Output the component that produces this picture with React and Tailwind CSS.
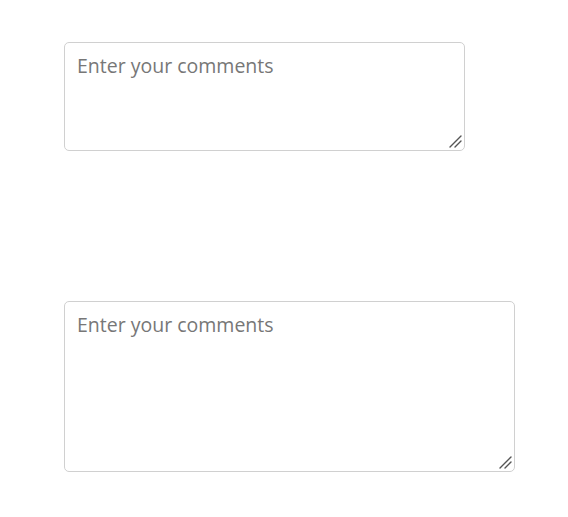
function Grip() {
  return (
    <svg
      className="pointer-events-none absolute bottom-[3px] right-[3px]"
      width="13"
      height="13"
      viewBox="0 0 13 13"
    >
      <path d="M1 12 L12 1 M6 12 L12 6" stroke="#555" strokeWidth="1.4" strokeLinecap="round" />
    </svg>
  );
}

function CommentBox({ size }) {
  return (
    <div className="relative">
      <textarea
        placeholder="Enter your comments"
        className={
          size === "lg"
            ? "block w-[451px] h-[171px] resize-none rounded-[5px] border border-[#d0d0d0] px-3 py-2 font-['Open_Sans','Noto_Sans',sans-serif] text-[19.5px] leading-[30px] text-[#333] placeholder:text-[#777777] outline-none"
            : "block w-[401px] h-[109px] resize-none rounded-[5px] border border-[#d0d0d0] px-3 py-2 font-['Open_Sans','Noto_Sans',sans-serif] text-[19.5px] leading-[30px] text-[#333] placeholder:text-[#777777] outline-none"
        }
      />
      <Grip />
    </div>
  );
}

export default function App() {
  return (
    <div className="min-h-[517px] bg-white pt-[42px] pl-[64px] flex flex-col items-start gap-[150px]">
      <CommentBox />
      <CommentBox size="lg" />
    </div>
  );
}
